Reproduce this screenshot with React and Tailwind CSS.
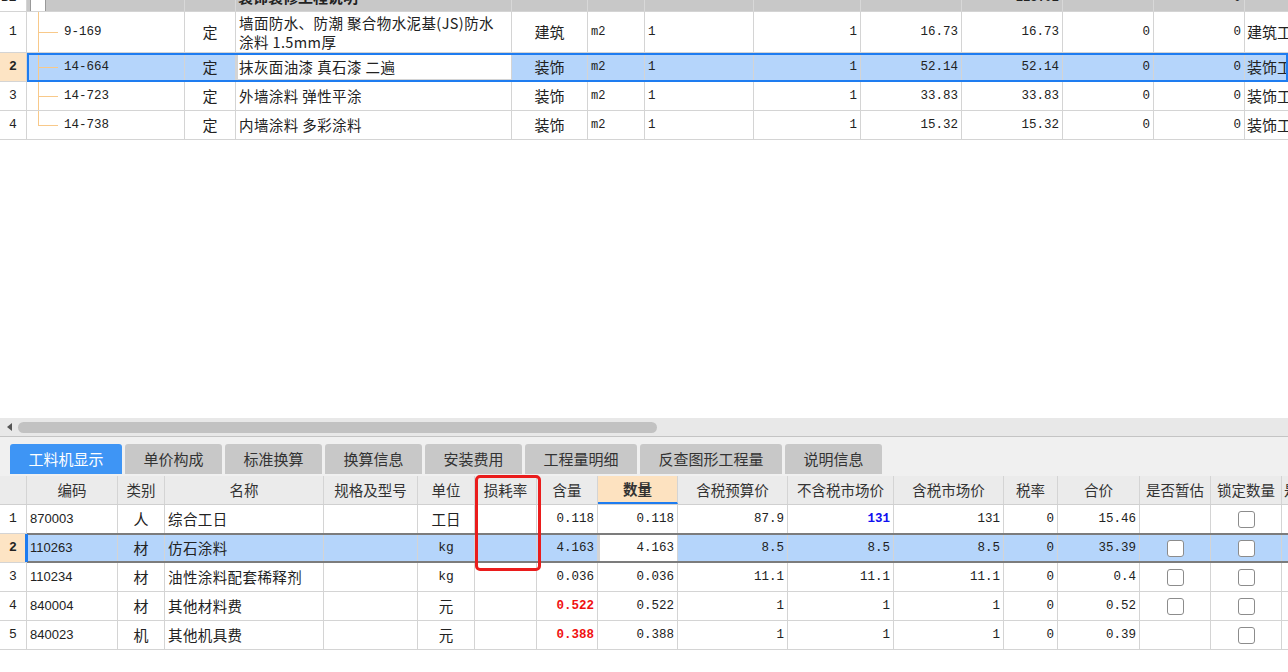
import React from "react";

const MONO = "font-['Liberation_Mono',monospace]";

const topCols = [
  "w-[27px]", "w-[158px]", "w-[51px]", "w-[276px]", "w-[76px]", "w-[57px]",
  "w-[109px]", "w-[107px]", "w-[101px]", "w-[101px]", "w-[91px]", "w-[91px]", "w-[120px]",
];

const topRows = [
  { n: "1", code: "9-169", t: "定", name: ["墙面防水、防潮 聚合物水泥基(JS)防水", "涂料 1.5mm厚"], sp: "建筑", u: "m2", a: "1", b: "1", c: "16.73", d: "16.73", e: "0", f: "0", g: "建筑工程", tall: true },
  { n: "2", code: "14-664", t: "定", name: ["抹灰面油漆 真石漆 二遍"], sp: "装饰", u: "m2", a: "1", b: "1", c: "52.14", d: "52.14", e: "0", f: "0", g: "装饰工程", sel: true },
  { n: "3", code: "14-723", t: "定", name: ["外墙涂料 弹性平涂"], sp: "装饰", u: "m2", a: "1", b: "1", c: "33.83", d: "33.83", e: "0", f: "0", g: "装饰工程" },
  { n: "4", code: "14-738", t: "定", name: ["内墙涂料 多彩涂料"], sp: "装饰", u: "m2", a: "1", b: "1", c: "15.32", d: "15.32", e: "0", f: "0", g: "装饰工程", last: true },
];

const botRows = [
  { n: "1", code: "870003", t: "人", name: "综合工日", u: "工日", hl: "0.118", q: "0.118", p1: "87.9", p2: "131", blue: true, p3: "131", tax: "0", tot: "15.46", est: false },
  { n: "2", code: "110263", t: "材", name: "仿石涂料", u: "kg", hl: "4.163", q: "4.163", p1: "8.5", p2: "8.5", p3: "8.5", tax: "0", tot: "35.39", est: true, sel: true },
  { n: "3", code: "110234", t: "材", name: "油性涂料配套稀释剂", u: "kg", hl: "0.036", q: "0.036", p1: "11.1", p2: "11.1", p3: "11.1", tax: "0", tot: "0.4", est: true },
  { n: "4", code: "840004", t: "材", name: "其他材料费", u: "元", hl: "0.522", red: true, q: "0.522", p1: "1", p2: "1", p3: "1", tax: "0", tot: "0.52", est: true },
  { n: "5", code: "840023", t: "机", name: "其他机具费", u: "元", hl: "0.388", red: true, q: "0.388", p1: "1", p2: "1", p3: "1", tax: "0", tot: "0.39", est: false },
];

const tabs = [
  { label: "工料机显示", w: "w-[112px]", active: true },
  { label: "单价构成", w: "w-[97px]" },
  { label: "标准换算", w: "w-[97px]" },
  { label: "换算信息", w: "w-[97px]" },
  { label: "安装费用", w: "w-[97px]" },
  { label: "工程量明细", w: "w-[112px]" },
  { label: "反查图形工程量", w: "w-[142px]" },
  { label: "说明信息", w: "w-[97px]" },
];

function Cell({ w, className = "", children }) {
  return (
    <div className={`${w} shrink-0 h-full flex items-center border-r border-[#d4d4d4] overflow-hidden whitespace-nowrap ${className}`}>
      {children}
    </div>
  );
}

function Check() {
  return <div className="w-[17px] h-[17px] rounded-[3px] border border-[#8c8c8c] bg-white" />;
}

function TreeCell({ code, last }) {
  return (
    <div className="relative w-[158px] shrink-0 h-full flex items-center border-r border-[#d4d4d4] pl-[37px]">
      <div className={`absolute left-[11px] top-0 w-px bg-[#f8c98a] ${last ? "h-1/2" : "h-full"}`} />
      <div className="absolute left-[11px] top-1/2 w-[20px] h-px bg-[#f8c98a]" />
      <span className={`${MONO} text-[12.5px] text-[#222]`}>{code}</span>
    </div>
  );
}

function TopRow({ r }) {
  const h = r.tall ? "h-[41px]" : "h-[29px]";
  return (
    <div className={`relative flex ${h} border-b border-[#d4d4d4] ${r.sel ? "bg-[#b5d5fb]" : "bg-white"}`}>
      <Cell w={topCols[0]} className={`justify-center ${MONO} text-[13px] ${r.sel ? "bg-[#fde4c4] font-bold" : "bg-white"}`}>{r.n}</Cell>
      <TreeCell code={r.code} last={r.last} />
      <Cell w={topCols[2]} className="justify-center text-[15px]">{r.t}</Cell>
      <Cell w={topCols[3]} className={`${r.sel ? "bg-white border-2 border-[#1e7cf0] pl-[1px]" : "pl-[3px]"}`}>
        <div className={`flex flex-col text-[14.5px] tracking-[0.4px] ${r.tall ? "leading-[19px]" : "leading-[20px]"}`}>
          {r.name.map((l, i) => (
            <span key={i}>{l}</span>
          ))}
        </div>
      </Cell>
      <Cell w={topCols[4]} className="justify-center text-[15px]">{r.sp}</Cell>
      <Cell w={topCols[5]} className={`pl-[3px] ${MONO} text-[12px]`}>{r.u}</Cell>
      <Cell w={topCols[6]} className={`pl-[3px] ${MONO} text-[12.5px]`}>{r.a}</Cell>
      <Cell w={topCols[7]} className={`justify-end pr-[3px] ${MONO} text-[12.5px]`}>{r.b}</Cell>
      <Cell w={topCols[8]} className={`justify-end pr-[3px] ${MONO} text-[12.5px]`}>{r.c}</Cell>
      <Cell w={topCols[9]} className={`justify-end pr-[3px] ${MONO} text-[12.5px]`}>{r.d}</Cell>
      <Cell w={topCols[10]} className={`justify-end pr-[3px] ${MONO} text-[12.5px]`}>{r.e}</Cell>
      <Cell w={topCols[11]} className={`justify-end pr-[3px] ${MONO} text-[12.5px]`}>{r.f}</Cell>
      <Cell w={topCols[12]} className="pl-[2px] text-[15px]">{r.g}</Cell>
      {r.sel && <div className="absolute left-[27px] right-0 top-0 bottom-[-1px] border-2 border-[#1e7cf0] pointer-events-none" />}
    </div>
  );
}

function TopHeaderRow() {
  return (
    <div className="h-[12px] overflow-hidden border-b border-[#d4d4d4]">
      <div className="flex h-[29px] -mt-[17px] bg-[#c8c8c8]">
        <Cell w={topCols[0]} className={`bg-white pl-[1px] ${MONO} font-bold text-[13px]`}>B2</Cell>
        <div className="relative w-[158px] shrink-0 h-full border-r border-[#d8d8d8]">
          <div className="absolute left-[3px] top-[13px] w-[16px] h-[16px] bg-white border border-[#999]" />
          <div className="absolute left-[11px] top-[29px] w-px h-2 bg-[#f8c98a]" />
        </div>
        <Cell w={topCols[2]} className="border-[#d8d8d8]" />
        <Cell w={topCols[3]} className="pl-[2px] font-bold text-[15px] border-[#d8d8d8]">装饰装修工程说明</Cell>
        <Cell w={topCols[4]} className="border-[#d8d8d8]" />
        <Cell w={topCols[5]} className="border-[#d8d8d8]" />
        <Cell w={topCols[6]} className="border-[#d8d8d8]" />
        <Cell w={topCols[7]} className="border-[#d8d8d8]" />
        <Cell w={topCols[8]} className="border-[#d8d8d8]" />
        <Cell w={topCols[9]} className={`justify-end pr-[3px] ${MONO} font-bold text-[12px] border-[#d8d8d8]`}>118.02</Cell>
        <Cell w={topCols[10]} className="border-[#d8d8d8]" />
        <Cell w={topCols[11]} className={`justify-end pr-[3px] ${MONO} font-bold text-[12px] border-[#d8d8d8]`}>0</Cell>
        <Cell w={topCols[12]} className="border-[#d8d8d8]" />
      </div>
    </div>
  );
}

function BotHeader() {
  const H = "justify-center text-[14.5px] text-[#333] border-[#d0d0d0]";
  return (
    <div className="flex h-[29px] bg-[#ebebeb] border-b border-[#d0d0d0]">
      <Cell w="w-[27px]" className={H} />
      <Cell w="w-[91px]" className={H}>编码</Cell>
      <Cell w="w-[47px]" className={H}>类别</Cell>
      <Cell w="w-[159px]" className={H}>名称</Cell>
      <Cell w="w-[94px]" className={H}>规格及型号</Cell>
      <Cell w="w-[57px]" className={H}>单位</Cell>
      <Cell w="w-[62px]" className={H}>损耗率</Cell>
      <Cell w="w-[61px]" className={H}>含量</Cell>
      <Cell w="w-[80px]" className={`${H} bg-[#fde2c0] font-bold text-[#222] border-b-2 border-b-[#1e7cf0]`}>数量</Cell>
      <Cell w="w-[110px]" className={H}>含税预算价</Cell>
      <Cell w="w-[106px]" className={H}>不含税市场价</Cell>
      <Cell w="w-[110px]" className={H}>含税市场价</Cell>
      <Cell w="w-[54px]" className={H}>税率</Cell>
      <Cell w="w-[82px]" className={H}>合价</Cell>
      <Cell w="w-[71px]" className={H}>是否暂估</Cell>
      <Cell w="w-[71px]" className={H}>锁定数量</Cell>
      <Cell w="w-[30px]" className={`${H} justify-start pl-[2px]`}>是</Cell>
    </div>
  );
}

function BotRow({ r }) {
  const N = `justify-end pr-[3px] ${MONO} text-[12.5px]`;
  return (
    <div className={`relative flex h-[29px] border-b border-[#d4d4d4] ${r.sel ? "bg-[#b5d5fb]" : "bg-white"}`}>
      <Cell w="w-[27px]" className={`justify-center ${MONO} text-[13px] ${r.sel ? "bg-[#fde4c4] font-bold" : "bg-white"}`}>{r.n}</Cell>
      <Cell w="w-[91px]" className="pl-[3px] font-['Liberation_Sans',sans-serif] text-[13px]">{r.code}</Cell>
      <Cell w="w-[47px]" className="justify-center text-[15px]">{r.t}</Cell>
      <Cell w="w-[159px]" className="pl-[3px] text-[14.5px] tracking-[0.4px]">{r.name}</Cell>
      <Cell w="w-[94px]" />
      <Cell w="w-[57px]" className={`justify-center ${r.u === "kg" ? `${MONO} text-[13px]` : "text-[14.5px]"}`}>{r.u}</Cell>
      <Cell w="w-[62px]" />
      <Cell w="w-[61px]" className={`${N} ${r.red ? "text-[#f01010] font-bold" : ""}`}>{r.hl}</Cell>
      <Cell w="w-[80px]" className={`${N} ${r.sel ? "bg-white border-x-2 border-[#808080]" : ""}`}>{r.q}</Cell>
      <Cell w="w-[110px]" className={N}>{r.p1}</Cell>
      <Cell w="w-[106px]" className={`${N} ${r.blue ? "text-[#1010f0] font-bold" : ""}`}>{r.p2}</Cell>
      <Cell w="w-[110px]" className={N}>{r.p3}</Cell>
      <Cell w="w-[54px]" className={N}>{r.tax}</Cell>
      <Cell w="w-[82px]" className={N}>{r.tot}</Cell>
      <Cell w="w-[71px]" className="justify-center">{r.est && <Check />}</Cell>
      <Cell w="w-[71px]" className="justify-center"><Check /></Cell>
      <Cell w="w-[30px]" />
      {r.sel && (
        <>
          <div className="absolute left-[27px] right-0 top-[-1px] bottom-[-1px] border-y-2 border-[#7c7c7c] pointer-events-none" />
          <div className="absolute left-[25px] top-0 bottom-0 w-[3px] bg-[#1e7cf0]" />
        </>
      )}
    </div>
  );
}

export default function App() {
  return (
    <div className="w-[1288px] h-[672px] overflow-hidden bg-white text-[#222] font-['Noto_Sans_CJK_SC',sans-serif] flex flex-col">
      <div className="flex flex-col">
        <TopHeaderRow />
        {topRows.map((r) => (
          <TopRow key={r.n} r={r} />
        ))}
      </div>
      <div className="h-[278px] shrink-0 bg-white" />
      <div className="h-[18px] shrink-0 bg-[#e8e8e8] flex items-center">
        <div className="w-[18px] flex justify-center">
          <div className="w-0 h-0 border-y-[4px] border-y-transparent border-r-[5px] border-r-[#555]" />
        </div>
        <div className="w-[639px] h-[11px] rounded-full bg-[#c2c2c2]" />
      </div>
      <div className="h-[40px] shrink-0 border-t border-[#c4c4c4] bg-[#f0f0f0] flex items-start gap-[3px] pl-[10px] pt-[7px]">
        {tabs.map((t) => (
          <div
            key={t.label}
            className={`${t.w} h-[30px] rounded-t-[3px] flex items-center justify-center text-[15px] ${t.active ? "bg-[#3e95f5] text-white" : "bg-[#c8c8c8] text-[#333]"}`}
          >
            {t.label}
          </div>
        ))}
      </div>
      <div className="relative flex flex-col">
        <BotHeader />
        {botRows.map((r) => (
          <BotRow key={r.n} r={r} />
        ))}
        <div className="absolute left-[475px] top-[-1px] w-[66px] h-[96px] border-[3px] border-[#ea1c1c] rounded-[5px] pointer-events-none" />
      </div>
      <div className="flex-1 bg-white" />
    </div>
  );
}
